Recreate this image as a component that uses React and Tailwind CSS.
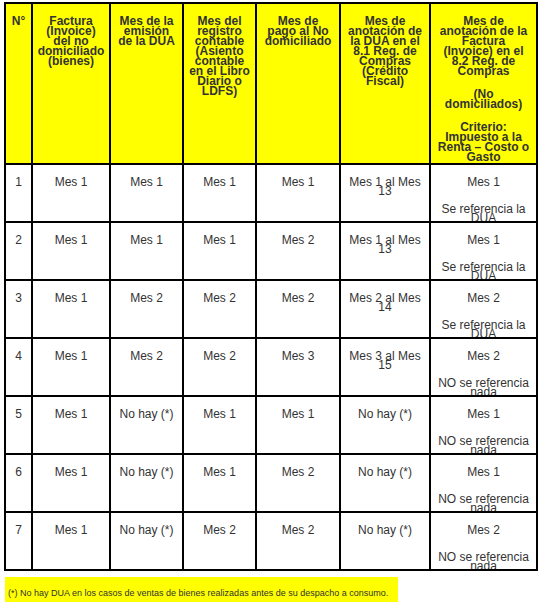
import React from "react";

const headers = [
  ["N°"],
  ["Factura", "(Invoice)", "del no", "domiciliado", "(bienes)"],
  ["Mes de la", "emisión", "de la DUA"],
  ["Mes del", "registro", "contable", "(Asiento", "contable", "en el Libro", "Diario o", "LDFS)"],
  ["Mes de", "pago al No", "domiciliado"],
  ["Mes de", "anotación de", "la DUA en el", "8.1 Reg. de", "Compras", "(Crédito", "Fiscal)"],
];

const rows = [
  ["1", "Mes 1", "Mes 1", "Mes 1", "Mes 1", ["Mes 1 al Mes", "13"], ["Se referencia la", "DUA"]],
  ["2", "Mes 1", "Mes 1", "Mes 1", "Mes 2", ["Mes 1 al Mes", "13"], ["Se referencia la", "DUA"]],
  ["3", "Mes 1", "Mes 2", "Mes 2", "Mes 2", ["Mes 2 al Mes", "14"], ["Se referencia la", "DUA"]],
  ["4", "Mes 1", "Mes 2", "Mes 2", "Mes 3", ["Mes 3 al Mes", "15"], ["NO se referencia", "nada"]],
  ["5", "Mes 1", "No hay (*)", "Mes 1", "Mes 1", ["No hay (*)"], ["NO se referencia", "nada"]],
  ["6", "Mes 1", "No hay (*)", "Mes 1", "Mes 2", ["No hay (*)"], ["NO se referencia", "nada"]],
  ["7", "Mes 1", "No hay (*)", "Mes 2", "Mes 2", ["No hay (*)"], ["NO se referencia", "nada"]],
];

const lastCol = ["Mes 1", "Mes 1", "Mes 2", "Mes 2", "Mes 1", "Mes 1", "Mes 2"];

function Lines({ lines }) {
  return lines.map((l, i) => (
    <React.Fragment key={i}>
      {i > 0 && <br />}
      {l}
    </React.Fragment>
  ));
}

export default function App() {
  return (
    <div
      className="bg-white w-[544px] h-[604px] overflow-hidden pt-[2px] pl-[4px]"
      style={{ fontFamily: '"Liberation Sans", Arial, sans-serif' }}
    >
      <div className="grid w-fit gap-[2px] bg-black p-[2px] grid-cols-[25px_76px_71px_71px_82px_88px_105px] grid-rows-[159px_repeat(7,56px)]">
        {headers.map((h, i) => (
          <div
            key={i}
            className="bg-[#ffff00] overflow-hidden pt-[12px] px-[1px] text-center font-bold text-[12px] leading-[10px] text-[#333] whitespace-nowrap"
          >
            <Lines lines={h} />
          </div>
        ))}
        <div className="bg-[#ffff00] overflow-hidden pt-[12px] px-[1px] text-center font-bold text-[12px] leading-[10px] text-[#333] whitespace-nowrap">
          <p>
            <Lines lines={["Mes de", "anotación de la", "Factura", "(Invoice) en el", "8.2 Reg. de", "Compras"]} />
          </p>
          <p className="mt-[13px]">
            <Lines lines={["(No", "domiciliados)"]} />
          </p>
          <p className="mt-[13px]">
            <Lines lines={["Criterio:", "Impuesto a la", "Renta – Costo o", "Gasto"]} />
          </p>
        </div>

        {rows.map((r, ri) => (
          <React.Fragment key={ri}>
            {r.slice(0, 5).map((c, ci) => (
              <div
                key={ci}
                className="bg-white overflow-hidden pt-[13px] px-[1px] text-center text-[12px] leading-[9px] text-[#333] whitespace-nowrap"
              >
                {c}
              </div>
            ))}
            <div className="bg-white overflow-hidden pt-[13px] px-[1px] text-center text-[12px] leading-[9px] text-[#333] whitespace-nowrap">
              <Lines lines={r[5]} />
            </div>
            <div className="bg-white overflow-hidden pt-[13px] px-[1px] text-center text-[12px] leading-[9px] text-[#333] whitespace-nowrap">
              <p>{lastCol[ri]}</p>
              <p className="mt-[18px]">
                <Lines lines={r[6]} />
              </p>
            </div>
          </React.Fragment>
        ))}
      </div>

      <div className="mt-[6px] ml-[1px] w-[393px] h-[25px] bg-[#ffff00] pt-[11px] pl-[3px] text-[9px] leading-[10px] text-[#333] whitespace-nowrap">
        (*) No hay DUA en los casos de ventas de bienes realizadas antes de su despacho a consumo.
      </div>
    </div>
  );
}
